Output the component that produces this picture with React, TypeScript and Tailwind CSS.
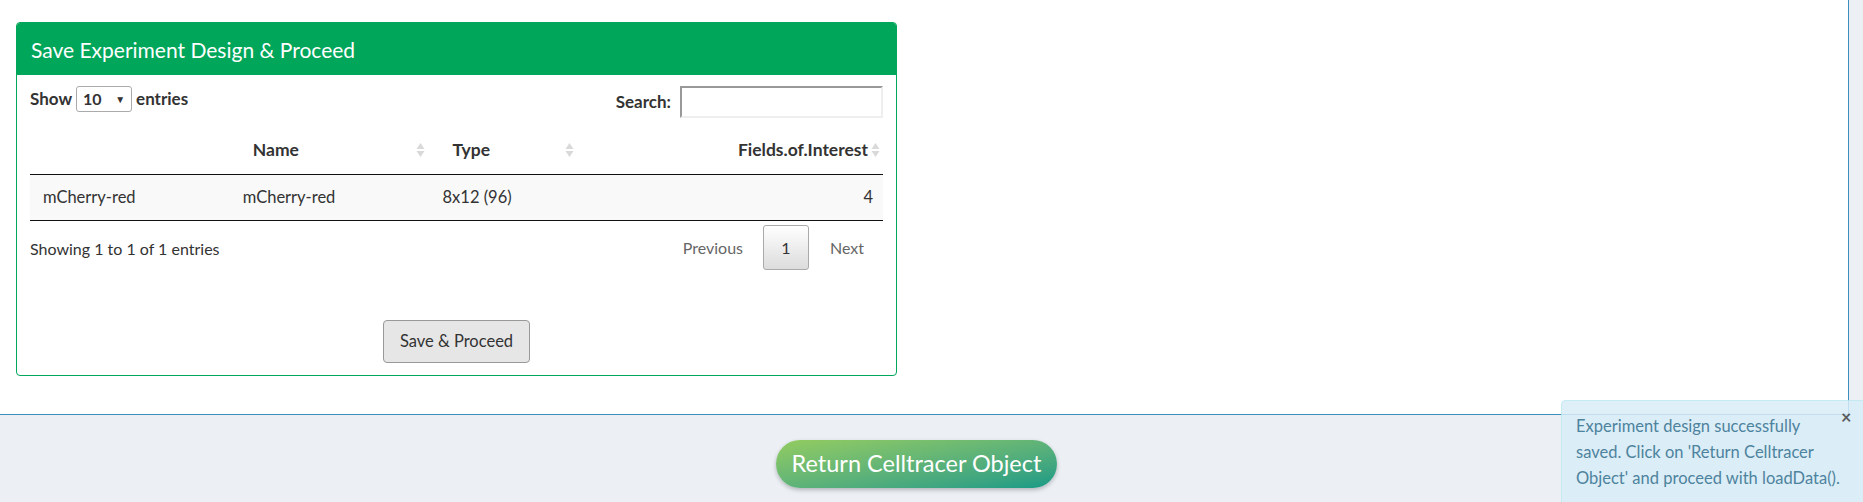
import React from "react";

const SortIcon = () => (
  <svg width="9" height="16" viewBox="0 0 9 16" className="inline-block">
    <path d="M4.5 1 L8.5 7 L0.5 7 Z" fill="#d9d9d9" />
    <path d="M4.5 15 L8.5 9 L0.5 9 Z" fill="#d9d9d9" />
  </svg>
);

export default function App() {
  const font = { fontFamily: "Lato, 'Open Sans', sans-serif" };
  return (
    <div className="relative w-[1863px] h-[502px] overflow-hidden bg-[#ecf0f5] flex flex-col" style={font}>
      {/* top content */}
      <div className="h-[415px] flex">
        <div className="w-[1849px] h-[415px] bg-white border-r border-b border-[#3c8dbc] pt-[22px] pl-[16px]">
          <div className="w-[881px] h-[354px] border border-[#00a65a] rounded-[4px] flex flex-col bg-white">
            <div className="h-[52px] bg-[#00a65a] rounded-t-[3px] flex items-center pl-[14px]">
              <span className="text-white text-[21px] leading-none">Save Experiment Design &amp; Proceed</span>
            </div>
            <div className="px-[13px] flex flex-col">
              {/* controls */}
              <div className="flex justify-between items-start mt-[11px] h-[40px]">
                <div className="flex items-center gap-[4px] text-[17px] font-bold text-[#333] mt-0">
                  <span>Show</span>
                  <div className="w-[56px] h-[26px] border border-[#aaa] rounded-[3px] flex items-center justify-between px-[6px]">
                    <span className="text-[16px] font-bold">10</span>
                    <span className="text-[10px] text-[#333]">▼</span>
                  </div>
                  <span>entries</span>
                </div>
                <div className="flex items-center gap-[9px] text-[17px] font-bold text-[#333]">
                  <span>Search:</span>
                  <div className="w-[203px] h-[32px] border-2 border-t-[#999] border-l-[#999] border-b-[#eee] border-r-[#eee] bg-white"></div>
                </div>
              </div>
              {/* table */}
              <div className="flex h-[49px] items-center border-b border-[#111] text-[17.5px] font-bold text-[#333]">
                <div className="w-[203px]"></div>
                <div className="w-[200px] flex items-center justify-between pl-[20px] pr-[8px]">
                  <span>Name</span>
                  <SortIcon />
                </div>
                <div className="w-[147px] flex items-center justify-between pl-[20px] pr-[5px]">
                  <span>Type</span>
                  <SortIcon />
                </div>
                <div className="w-[304px] flex items-center justify-end pr-[3px] gap-[3px]">
                  <span>Fields.of.Interest</span>
                  <SortIcon />
                </div>
              </div>
              <div className="flex h-[46px] items-center bg-[#f9f9f9] border-b border-[#111] text-[16.5px] text-[#333]">
                <div className="w-[203px] pl-[13px]">mCherry-red</div>
                <div className="w-[200px] pl-[10px]">mCherry-red</div>
                <div className="w-[147px] pl-[10px]">8x12 (96)</div>
                <div className="w-[304px] text-right pr-[10px]">4</div>
              </div>
              {/* info + pagination */}
              <div className="flex justify-between items-start mt-[4px]">
                <span className="text-[16px] text-[#333] mt-[12px]">Showing 1 to 1 of 1 entries</span>
                <div className="flex items-center text-[16px] text-[#666] mr-[19px]">
                  <span className="mr-[20px]">Previous</span>
                  <div className="w-[46px] h-[45px] border border-[#aaa] rounded-[3px] bg-gradient-to-b from-white to-[#dcdcdc] flex items-center justify-center text-[#333]">1</div>
                  <span className="ml-[21px]">Next</span>
                </div>
              </div>
              <div className="flex justify-center mt-[50px]">
                <div className="w-[147px] h-[43px] border border-[#999] rounded-[4px] bg-[#e6e6e6] flex items-center justify-center text-[16.5px] text-[#333]">
                  Save &amp; Proceed
                </div>
              </div>
            </div>
          </div>
        </div>
        <div className="flex-1"></div>
      </div>
      {/* bottom */}
      <div className="flex-1 pl-[776px] pt-[25px]">
        <div className="w-[281px] h-[48px] rounded-full bg-gradient-to-br from-[#93cc5f] to-[#0f9a86] shadow-[0_2px_4px_rgba(0,0,0,0.25)] flex items-center justify-center text-white text-[23.5px]">
          Return Celltracer Object
        </div>
      </div>
      {/* notification */}
      <div className="absolute left-[1561px] top-[400px] w-[310px] h-[110px] bg-[#d9edf7] border border-[#bce8f1] rounded-[4px] opacity-[0.85] pl-[14px] pt-[12px] text-[16.5px] leading-[26px] text-[#31708f]">
        <div className="w-[272px]">Experiment design successfully saved. Click on 'Return Celltracer Object' and proceed with loadData().</div>
        <span className="absolute left-[279px] top-[7px] text-[18px] font-bold text-[#444] leading-none">×</span>
      </div>
    </div>
  );
}
